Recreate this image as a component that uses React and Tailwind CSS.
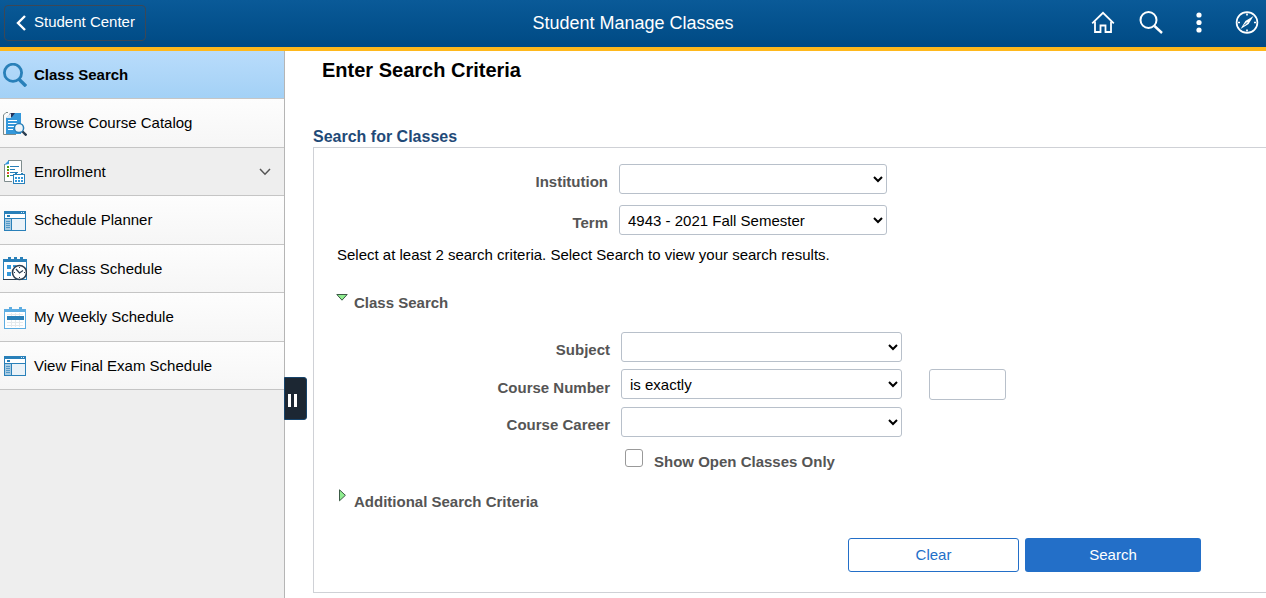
import { useState } from 'react';

function SearchIcon() {
  return (
    <svg width="24" height="24" viewBox="0 0 24 24" fill="none" stroke="#2980b9">
      <circle cx="10" cy="9.8" r="8.6" strokeWidth="2.8" />
      <path d="M16 16.2 L23 23.2" strokeWidth="3.4" />
    </svg>
  );
}

function CatalogIcon() {
  return (
    <svg width="24" height="24" viewBox="0 0 24 24" fill="none">
      <path d="M5 0.5 H3 L0.5 3 V22.5 H13" stroke="#7b8a8b" />
      <path d="M9 1 H18 V22 H3 V6 Z" fill="#3498db" />
      <path d="M5 6 L7 1 H12 L9 5 Z" fill="#24345c" />
      <path d="M3 6 L8 1 V6 Z" fill="#dfeaf2" />
      <path d="M5 8.5 H14 M5 11.5 H16 M5 14.5 H11 M5 17.5 H10" stroke="#fff" />
      <circle cx="16" cy="16" r="4.6" fill="#eef4f8" stroke="#2980b9" strokeWidth="1.5" />
      <path d="M19.5 19.5 L23.5 23.5" stroke="#2c3e50" strokeWidth="2.4" />
    </svg>
  );
}

function EnrollmentIcon() {
  return (
    <svg width="24" height="24" viewBox="0 0 24 24" fill="none">
      <path d="M5 0.5 H18.5 V21.5 H1.5 V4 Z" fill="#fff" />
      <path d="M1.5 4 V21.5 H9 M5 0.5 H18.5 V12" stroke="#7f8c8d" />
      <path d="M1 5 L6 0 V4 Z" fill="#3498db" />
      <path d="M4 6 h2 v2 h-2 z M4 9 h2 v2 h-2 z M4 15 h2 v2 h-2 z" fill="#4e9a06" />
      <path d="M4 12 h2 v2 h-2 z" fill="#e74c3c" />
      <path d="M7 6.5 H16 M7 9.5 H12 M7 12.5 H15 M7 15.5 H10" stroke="#2980b9" />
      <rect x="10.5" y="14.5" width="11" height="9" fill="#fff" stroke="#2980b9" />
      <path d="M13 13 V15 M19 13 V15" stroke="#2980b9" strokeWidth="2" />
      <path d="M12 18 H20 M12 21 H20" stroke="#3498db" strokeWidth="2" strokeDasharray="2 1" />
    </svg>
  );
}

function WindowIcon() {
  return (
    <svg width="24" height="24" viewBox="0 0 24 24" fill="none" shapeRendering="crispEdges">
      <rect x="1" y="2" width="22" height="20" fill="#2980b9" />
      <rect x="2" y="5" width="20" height="4" fill="#fff" />
      <rect x="4" y="6" width="3" height="2" fill="#2980b9" />
      <rect x="18" y="3" width="1" height="1" fill="#d6eaf8" />
      <rect x="20" y="3" width="1" height="1" fill="#d6eaf8" />
      <rect x="2" y="10" width="6" height="11" fill="#a9cce3" />
      <path d="M3 12.5 H7 M3 14.5 H7 M3 16.5 H7 M3 18.5 H7" stroke="#5499c7" />
      <rect x="9" y="10" width="13" height="11" fill="#eaf2f8" />
    </svg>
  );
}

function ClassScheduleIcon() {
  return (
    <svg width="24" height="24" viewBox="0 0 24 24" fill="none">
      <rect x="0.5" y="2.5" width="23" height="20" fill="#fff" stroke="#2980b9" />
      <path d="M0 3.5 H24" stroke="#2980b9" strokeWidth="3" />
      <path d="M0 22.5 H13" stroke="#2c3e50" />
      <path d="M6.5 0 V4 M12.5 0 V4 M18.5 0 V4" stroke="#2980b9" strokeWidth="3" />
      <path d="M4 8 h4 v4 h-4 z M4 15 h4 v4 h-4 z M10 8 h3 v2 h-3 z" fill="#3498db" />
      <circle cx="16.5" cy="15.5" r="7" fill="#fff" stroke="#2c3e50" strokeWidth="1.6" />
      <path d="M13 12 L16.5 16 L20 13.5" stroke="#2c3e50" strokeWidth="1.3" />
      <path d="M16.5 10 V11 M16.5 20 V21 M11 15.5 H12 M21 15.5 H22" stroke="#2c3e50" />
    </svg>
  );
}

function WeeklyScheduleIcon() {
  return (
    <svg width="24" height="24" viewBox="0 0 24 24" fill="none" shapeRendering="crispEdges">
      <rect x="1.5" y="3.5" width="21" height="19" fill="#fff" stroke="#5dade2" />
      <path d="M1 4.5 H23" stroke="#5dade2" strokeWidth="3" />
      <path d="M7 1 V4 M17 1 V4" stroke="#5dade2" strokeWidth="3" />
      <path d="M4 8.5 H20 M4 16.5 H20 M4 19.5 H20 M8.5 7 V21 M12.5 7 V21 M16.5 7 V21" stroke="#e6eaec" />
      <rect x="4" y="10" width="17" height="4" fill="#2980b9" />
    </svg>
  );
}

const NAV_ITEMS = [
  { label: 'Class Search', icon: SearchIcon, active: true },
  { label: 'Browse Course Catalog', icon: CatalogIcon },
  { label: 'Enrollment', icon: EnrollmentIcon, expandable: true },
  { label: 'Schedule Planner', icon: WindowIcon },
  { label: 'My Class Schedule', icon: ClassScheduleIcon },
  { label: 'My Weekly Schedule', icon: WeeklyScheduleIcon },
  { label: 'View Final Exam Schedule', icon: WindowIcon },
];

function Header() {
  return (
    <header className="grid h-[51px] grid-cols-[1fr_auto_1fr] items-center border-b-4 border-[#ffb81c] bg-linear-to-b from-[#0a5a98] to-[#004a84] pb-[2px] text-white">
      <button className="ml-1 flex h-9 w-[142px] items-center gap-2 rounded border border-[#3c4856] pl-[11px] text-[15px] whitespace-nowrap">
        <svg width="10" height="16" viewBox="0 0 10 16" fill="none" stroke="currentColor" strokeWidth="2.4">
          <path d="M9 1 L2 8 L9 15" />
        </svg>
        Student Center
      </button>
      <h1 className="text-lg">Student Manage Classes</h1>
      <div className="flex justify-end gap-6 pr-[7px]">
        <button aria-label="Home">
          <svg width="24" height="24" viewBox="0 0 24 24" fill="none" stroke="currentColor" strokeWidth="1.8">
            <path d="M1.2 12.4 L12 1.8 L22.8 12.4" />
            <path d="M4 10.5 V21 H9.5 V14.5 H14.5 V21 H20 V10.5" />
          </svg>
        </button>
        <button aria-label="Search">
          <svg width="24" height="24" viewBox="0 0 24 24" fill="none" stroke="currentColor">
            <circle cx="9.5" cy="9" r="8" strokeWidth="2" />
            <path d="M15.5 15 L23 22" strokeWidth="2.4" />
          </svg>
        </button>
        <button aria-label="Actions">
          <svg width="24" height="24" viewBox="0 0 24 24" fill="currentColor">
            <circle cx="12" cy="4" r="2.6" />
            <circle cx="12" cy="11.5" r="2.6" />
            <circle cx="12" cy="19" r="2.6" />
          </svg>
        </button>
        <button aria-label="Navigator">
          <svg width="24" height="24" viewBox="0 0 24 24" fill="none" stroke="currentColor" strokeWidth="1.7">
            <circle cx="12" cy="11.5" r="10.4" />
            <path d="M12 2.5 V4.5 M12 18.5 V20.5 M3 11.5 H5 M19 11.5 H21" />
            <path d="M18.5 5 L13.6 13.1 L5.5 18 L10.4 9.9 Z" fill="currentColor" stroke="none" />
            <path d="M9.2 14.3 L12.2 11.3" stroke="#03508c" strokeWidth="1" />
          </svg>
        </button>
      </div>
    </header>
  );
}

function NavItem({ item }) {
  const Icon = item.icon;
  let look = 'bg-linear-to-b from-[#fdfdfd] to-[#f6f6f6]';
  if (item.active) look = 'bg-linear-to-b from-[#b9dcfb] to-[#a3d1f6] font-bold';
  if (item.expandable) look = 'bg-[#eeeeee]';

  return (
    <li className="h-12 even:h-[49px]">
      <a href="#" className={`flex h-full items-center gap-[7px] border-b border-[#c5c5c5] pt-px pl-[3px] ${look}`}>
        <Icon />
        <span className="flex-1">{item.label}</span>
        {item.expandable && (
          <svg className="mr-[13px]" width="12" height="8" viewBox="0 0 12 8" fill="none" stroke="#555" strokeWidth="1.5">
            <path d="M1 1 L6 6.2 L11 1" />
          </svg>
        )}
      </a>
    </li>
  );
}

function Field({ id, label, labelWidth, selectWidth, options, children }) {
  return (
    <div className="flex items-end">
      <label htmlFor={id} className={`pr-[11px] pb-[2px] text-right leading-5 font-bold text-[#555] ${labelWidth}`}>
        {label}
      </label>
      <select id={id} className={`h-[30px] self-start rounded-[3px] border border-[#b8c0ca] bg-white px-1 ${selectWidth}`}>
        {options.map((option) => (
          <option key={option}>{option}</option>
        ))}
      </select>
      {children}
    </div>
  );
}

function Section({ title, open, onToggle }) {
  return (
    <button
      type="button"
      aria-expanded={open}
      onClick={onToggle}
      className="flex items-center gap-[6px] pl-[22px] leading-5 font-bold text-[#555]"
    >
      <svg width="12" height="26" viewBox="0 0 12 26" className="-my-[3px]" fill="#90ee90" stroke="#3c5a46">
        {open ? <path d="M0.8 4.5 H11.2 L6 10.2 Z" /> : <path d="M3.5 0.8 V11.8 L9.4 6.3 Z" />}
      </svg>
      {title}
    </button>
  );
}

function SearchForm() {
  const [classOpen, setClassOpen] = useState(true);
  const [moreOpen, setMoreOpen] = useState(false);

  return (
    <form className="flex flex-col border border-r-0 border-[#cfd1d6] pt-4 pb-5" onSubmit={(e) => e.preventDefault()}>
      <div className="flex flex-col gap-[11px]">
        <Field id="institution" label="Institution" labelWidth="w-[305px]" selectWidth="w-[268px]" options={['']} />
        <Field id="term" label="Term" labelWidth="w-[305px]" selectWidth="w-[268px]" options={['4943 - 2021 Fall Semester']} />
      </div>
      <p className="mt-[10px] pl-[23px] leading-5">
        Select at least 2 search criteria. Select Search to view your search results.
      </p>

      <div className="mt-7">
        <Section title="Class Search" open={classOpen} onToggle={() => setClassOpen(!classOpen)} />
      </div>
      {classOpen && (
        <div className="mt-[19px] flex flex-col gap-[7px]">
          <Field id="subject" label="Subject" labelWidth="w-[307px]" selectWidth="w-[281px]" options={['']} />
          <Field id="match" label="Course Number" labelWidth="w-[307px]" selectWidth="w-[281px]" options={['is exactly']}>
            <input
              type="text"
              aria-label="Course Number"
              className="ml-[27px] h-[31px] w-[77px] rounded-[3px] border border-[#b8c0ca] px-2"
            />
          </Field>
          <Field id="career" label="Course Career" labelWidth="w-[307px]" selectWidth="w-[281px]" options={['']} />
          <div className="mt-[5px] flex items-start pl-[311px]">
            <input
              id="open-only"
              type="checkbox"
              className="size-[18px] appearance-none rounded-[3px] border border-[#999] bg-white checked:bg-[#236fc8]"
            />
            <label htmlFor="open-only" className="pt-[3px] pl-[11px] leading-5 font-bold text-[#555]">
              Show Open Classes Only
            </label>
          </div>
        </div>
      )}

      <div className="mt-5">
        <Section title="Additional Search Criteria" open={moreOpen} onToggle={() => setMoreOpen(!moreOpen)} />
      </div>

      <div className="mt-[26px] flex justify-end gap-[6px] pr-[65px]">
        <button type="reset" className="h-[34px] w-[171px] rounded-[3px] border border-[#236fc8] text-[#236fc8]">
          Clear
        </button>
        <button type="submit" className="h-[34px] w-[176px] rounded-[3px] bg-[#236fc8] text-white">
          Search
        </button>
      </div>
    </form>
  );
}

export default function App() {
  return (
    <div className="flex min-h-screen flex-col bg-white font-['Liberation_Sans',Arial,sans-serif] text-[15px] text-black">
      <Header />
      <div className="flex flex-1">
        <nav className="relative w-[285px] shrink-0 border-r border-[#b5b5b5] bg-[#eeeeee]">
          <ul>
            {NAV_ITEMS.map((item) => (
              <NavItem key={item.label} item={item} />
            ))}
          </ul>
          <button
            aria-label="Collapse menu"
            className="absolute top-[326px] left-full flex h-[43px] w-[23px] items-center gap-[3px] rounded-r-[3px] border border-[#17446b] bg-[#1c2733] pl-[3px]"
          >
            <span className="mt-1 h-[13px] w-[3px] bg-white" />
            <span className="mt-1 h-[13px] w-[3px] bg-white" />
          </button>
        </nav>
        <main className="min-w-0 flex-1 pl-7">
          <h2 className="pt-[5px] pl-[9px] text-xl font-bold">Enter Search Criteria</h2>
          <h3 className="mt-[43px] text-base leading-5 font-bold text-[#1f4a78]">Search for Classes</h3>
          <SearchForm />
        </main>
      </div>
    </div>
  );
}
